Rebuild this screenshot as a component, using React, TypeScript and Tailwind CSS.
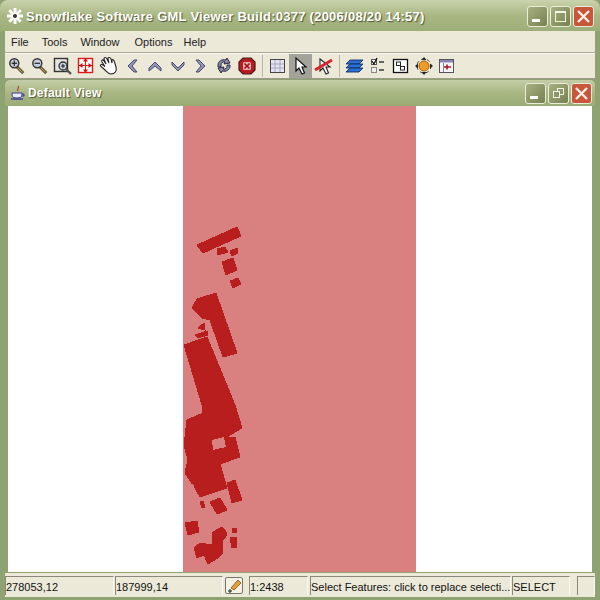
import React from "react";

const Mag = ({ sign }: { sign: "+" | "-" }) => (
  <svg width="18" height="18" viewBox="0 0 20 20">
    <line x1="10" y1="11" x2="17" y2="18" stroke="#6a5a3a" strokeWidth="3.400" />
    <line x1="11" y1="12" x2="16" y2="17" stroke="#c8b060" strokeWidth="1" />
    <circle cx="7" cy="7" r="5" fill="#c8ccdc" stroke="#333" strokeWidth="1.600" />
    <line x1="4" y1="7" x2="10" y2="7" stroke="#222" strokeWidth="1.300" />
    {sign === "+" && <line x1="7" y1="4" x2="7" y2="10" stroke="#222" strokeWidth="1.300" />}
  </svg>
);

const ZoomBox = () => (
  <svg width="20" height="20" viewBox="0 0 20 20">
    <rect x="1.500" y="2.500" width="13" height="13" fill="#e8e6de" stroke="#333" strokeWidth="1.400" />
    <circle cx="10" cy="10" r="4" fill="#c8ccdc" stroke="#333" strokeWidth="1.300" />
    <line x1="8" y1="10" x2="12" y2="10" stroke="#222" />
    <line x1="10" y1="8" x2="10" y2="12" stroke="#222" />
    <line x1="13" y1="13" x2="18" y2="18" stroke="#555" strokeWidth="2.400" />
  </svg>
);

const FullExtent = () => (
  <svg width="20" height="20" viewBox="0 0 20 20">
    <rect x="2.500" y="2.500" width="14" height="14" fill="#fff" stroke="#e01818" strokeWidth="1.400" />
    <line x1="9.500" y1="2.500" x2="9.500" y2="16.500" stroke="#e01818" />
    <line x1="2.500" y1="9.500" x2="16.500" y2="9.500" stroke="#e01818" />
    <path d="M9.500 2L7 5.500H12ZM9.500 17L7 13.500H12ZM3 9.500L6.500 7V12ZM16 9.500L12.500 7V12Z" fill="#d01010" />
  </svg>
);

const Hand = () => (
  <svg width="20" height="20" viewBox="0 0 20 20">
    <path d="M3 6C2 4 4 3 5 5L7 8L5 3C5 1 7 1 8 3L10 7L9 2.500C9 1 11 1 12 3L13 7L13 4C14 3 15 4 15.500 6L17 11C18 15 16 18 12 18C9 18 8 16 6 14L1.500 10C1 8.500 3 8 4 9L6 10.500Z" fill="#fff" stroke="#222" strokeWidth="1.100" />
  </svg>
);

const Chevron = ({ d }: { d: string }) => (
  <svg width="18" height="18" viewBox="0 0 18 18">
    <path d={d} fill="#9494bc" stroke="#4a4a6a" strokeWidth="1" />
  </svg>
);

const Refresh = () => (
  <svg width="20" height="20" viewBox="0 0 20 20">
    <path d="M4 9C4 5 8 3 12 4L13 2L16 7L10 8L11 6C8.500 5.500 7 7 7 9L7 11L4 11Z" fill="#8888a8" stroke="#2a2a40" strokeWidth="1" />
    <path d="M16 10C16 14 12 16 8 15L7 17L4 12L10 11L9 13C11.500 13.500 13 12 13 10L13 9L16 9Z" fill="#8888a8" stroke="#2a2a40" strokeWidth="1" />
  </svg>
);

const Stop = () => (
  <svg width="20" height="20" viewBox="0 0 20 20">
    <path d="M6 2H14L18 6V14L14 18H6L2 14V6Z" fill="#b81c22" stroke="#4a1a1a" strokeWidth="1.200" />
    <rect x="6" y="6" width="8" height="8" rx="1.500" fill="#e8b0b0" />
    <path d="M7.500 7.500L12.500 12.500M12.500 7.500L7.500 12.500" stroke="#a01010" strokeWidth="1.600" />
  </svg>
);

const Grid = () => (
  <svg width="18" height="18" viewBox="0 0 18 18">
    <rect x="1.500" y="2.500" width="14" height="13" fill="#e4e4f0" stroke="#444" />
    <path d="M6 3V15M11 3V15M2 7H15M2 11H15" stroke="#a8a8c0" fill="none" />
  </svg>
);

const Arrow = () => (
  <svg width="18" height="20" viewBox="0 0 18 20">
    <path d="M4 2V15L7 12L10 18L12.500 17L10 11H14Z" fill="#fff" stroke="#111" strokeWidth="1.200" />
  </svg>
);

const ArrowOff = () => (
  <svg width="20" height="20" viewBox="0 0 20 20">
    <path d="M6 3V15L9 12L12 18L14.500 17L12 11H16Z" fill="#fff" stroke="#222" strokeWidth="1.100" />
    <line x1="1" y1="14" x2="18" y2="4" stroke="#d8242c" strokeWidth="3" />
  </svg>
);

const Layers = () => (
  <svg width="20" height="20" viewBox="0 0 20 20">
    {[4, 8, 12].map((y) => (
      <path key={y} d={`M5 ${y}H18L14 ${y + 4}H1Z`} fill="#2a70d0" stroke="#102a68" strokeWidth="0.900" />
    ))}
  </svg>
);

const CheckList = () => (
  <svg width="18" height="18" viewBox="0 0 18 18">
    <rect x="2.500" y="2.500" width="5" height="5" fill="#fff" stroke="#555" />
    <path d="M3 4L5 7L8 1" stroke="#111" fill="none" strokeWidth="1.300" />
    <rect x="2.500" y="10.500" width="5" height="5" fill="#eee" stroke="#888" />
    <path d="M10 5H15M10 13H15" stroke="#666" strokeWidth="2" />
  </svg>
);

const Boxes = () => (
  <svg width="18" height="18" viewBox="0 0 18 18">
    <rect x="1.500" y="2.500" width="14" height="13" fill="#fff" stroke="#111" strokeWidth="1.300" />
    <rect x="4.500" y="5" width="4" height="3.500" fill="#fff" stroke="#222" />
    <rect x="8.500" y="9.500" width="4" height="3.500" fill="#fff" stroke="#222" />
  </svg>
);

const Orange = () => (
  <svg width="20" height="20" viewBox="0 0 20 20">
    <circle cx="10" cy="10" r="5" fill="#f09a28" stroke="#a86010" />
    <path d="M10 1L7.500 4H12.500ZM10 19L7.500 16H12.500ZM1 10L4 7.500V12.500ZM19 10L16 7.500V12.500Z" fill="#222" />
    <circle cx="10" cy="10" r="7" fill="none" stroke="#333" strokeDasharray="3 3" />
  </svg>
);

const WinPin = () => (
  <svg width="18" height="18" viewBox="0 0 18 18">
    <rect x="1.500" y="2.500" width="14" height="13" fill="#f6f4f4" stroke="#555" />
    <rect x="2" y="3" width="13" height="2.500" fill="#8c84b4" />
    <path d="M6 10H13M9 7.500V12.500" stroke="#b01828" strokeWidth="1.600" />
    <path d="M5.500 15V6" stroke="#888" />
  </svg>
);

const Tool = ({ children, active }: { children: React.ReactNode; active?: boolean }) => (
  <div className={`w-[23px] h-[24px] flex items-center justify-center shrink-0 ${active ? "bg-[#a3a39b]" : ""}`}>
    {children}
  </div>
);

const Sep = () => <div className="w-px h-[22px] mx-[3px] ml-[4px] bg-[#b8b6a6] shrink-0" />;

const WinBtn = ({ kind }: { kind: "min" | "max" | "restore" | "close" }) => {
  const base = "w-[21px] h-[21px] rounded-[3px] border border-[#e8ecd8] flex items-center justify-center shrink-0";
  const color = kind === "close" ? "bg-[#c8563a]" : "bg-gradient-to-br from-[#a7b184] to-[#76804f]";
  return (
    <div className={`${base} ${color}`}>
      <svg width="17" height="17" viewBox="0 0 17 17">
        {kind === "min" && <rect x="3" y="11" width="8" height="3" fill="#fff" />}
        {kind === "max" && (
          <g fill="none" stroke="#f2f4e6">
            <rect x="3.500" y="3.500" width="10" height="10" />
            <rect x="3" y="3" width="11" height="2" fill="#f2f4e6" stroke="none" />
          </g>
        )}
        {kind === "restore" && (
          <g fill="none" stroke="#f2f4e6">
            <rect x="7.500" y="3.500" width="6" height="6" />
            <rect x="3.500" y="6.500" width="6" height="6" fill="#8c9568" />
          </g>
        )}
        {kind === "close" && <path d="M3 3L14 14M14 3L3 14" stroke="#fbeee4" strokeWidth="2.400" />}
      </svg>
    </div>
  );
};

const Cell = ({ w, children }: { w: string; children?: React.ReactNode }) => (
  <div className={`${w} h-[19px] shrink-0 border-l border-t border-[#8a8878] border-b-[#fbfaf2] border-r border-r-[#fbfaf2] text-[11px] leading-[20px] text-[#111] whitespace-nowrap overflow-hidden`}>
    {children}
  </div>
);

const buildings = [
  "197,245 237,227 241,236 203,253",
  "217,249 225,247 228,252 218,255",
  "230,251 237,248 238,253 232,256",
  "222,262 233,258 237,270 226,275",
  "230,281 238,278 241,284 233,288",
  "192,308 197,299 216,293 237,353 223,357 210,320 202,318",
  "198,328 204,323 205,330",
  "195,335 207,331 208,335 198,338",
  "184,345 207,337 235,405 242,428 227,437 235,437 240,457 220,464 227,488 200,497 195,488 185,473 188,460 184,445 187,420 203,413 202,405",
  "227,483 235,480 242,500 232,503",
  "210,502 220,498 227,510 217,514",
  "200,502 203,501 205,507 202,508",
  "185,523 197,521 199,532 188,535",
  "194,548 200,543 212,545 213,532 220,528 222,527 227,533 225,538 222,540 223,553 218,558 208,564 204,555 197,558",
  "230,538 236,537 237,547 232,548",
  "232,528 236,528 237,532 233,533",
];

const gaps = [
  "212,440 224,437 226,447 213,450",
  "190,485 193,484 198,497 196,498",
];

export default function App() {
  return (
    <div
      className="w-[600px] h-[600px] overflow-hidden bg-[#8fa271] flex flex-col text-[#111]"
      style={{ fontFamily: '"Liberation Sans", Arial, sans-serif' }}
    >
      <div className="h-[31px] shrink-0 rounded-t-[8px] bg-gradient-to-b from-[#c9d3ae] via-[#a9b783] to-[#9eae79] flex items-center pl-[6px] pr-[6px]">
        <svg width="18" height="18" viewBox="0 0 18 18" className="shrink-0">
          <g stroke="#fff" strokeWidth="3">
            <line x1="9" y1="1" x2="9" y2="17" />
            <line x1="1" y1="9" x2="17" y2="9" />
            <line x1="3.300" y1="3.300" x2="14.700" y2="14.700" />
            <line x1="14.700" y1="3.300" x2="3.300" y2="14.700" />
          </g>
          <circle cx="9" cy="9" r="2" fill="#333" />
        </svg>
        <div className="ml-[2px] mt-[2px] flex-1 text-[13px] font-bold tracking-[0.25px] text-white whitespace-nowrap [text-shadow:1px_1px_1px_#4c5636]">
          Snowflake Software GML Viewer Build:0377 (2006/08/20 14:57)
        </div>
        <div className="flex gap-[2px] mt-[1px]">
          <WinBtn kind="min" />
          <WinBtn kind="max" />
          <WinBtn kind="close" />
        </div>
      </div>

      <div className="mx-[5px] flex flex-col flex-1 min-h-0">
        <div className="h-[21px] shrink-0 bg-[#ece9d8] flex items-center text-[11px] text-[#222] pl-[6px] gap-[13px] pt-[1px]">
          <span>File</span>
          <span>Tools</span>
          <span>Window</span>
          <span className="ml-[2px]">Options</span>
          <span className="-ml-[2px]">Help</span>
        </div>
        <div className="h-[2px] shrink-0 bg-[#a9a797] border-b border-[#fbfaf2]" />
        <div className="h-[25px] shrink-0 bg-[#ece9d8] flex items-center border-b border-[#9c9a8c]">
          <Tool><Mag sign="+" /></Tool>
          <Tool><Mag sign="-" /></Tool>
          <Tool><ZoomBox /></Tool>
          <Tool><FullExtent /></Tool>
          <Tool><Hand /></Tool>
          <Tool><Chevron d="M11 3L5 9L11 15L14 15L9 9L14 3Z" /></Tool>
          <Tool><Chevron d="M3 11L9 5L15 11L15 14L9 9L3 14Z" /></Tool>
          <Tool><Chevron d="M3 5L9 11L15 5L15 8L9 14L3 8Z" /></Tool>
          <Tool><Chevron d="M7 3L13 9L7 15L4 15L9 9L4 3Z" /></Tool>
          <Tool><Refresh /></Tool>
          <Tool><Stop /></Tool>
          <Sep />
          <Tool><Grid /></Tool>
          <Tool active><Arrow /></Tool>
          <Tool><ArrowOff /></Tool>
          <Sep />
          <Tool><Layers /></Tool>
          <Tool><CheckList /></Tool>
          <Tool><Boxes /></Tool>
          <Tool><Orange /></Tool>
          <Tool><WinPin /></Tool>
        </div>

        <div className="h-[26px] shrink-0 mt-px rounded-t-[5px] bg-gradient-to-b from-[#c3cda7] via-[#a9b783] to-[#9aab74] flex items-center pl-[5px] pr-[3px]">
          <svg width="16" height="16" viewBox="0 0 16 16" className="shrink-0">
            <path d="M8 1C10 3 6 4 8 6" stroke="#c04028" fill="none" strokeWidth="1.300" />
            <path d="M2 8H12V10C12 12 10 13 7 13C4 13 2 12 2 10Z" fill="#e8e8f8" stroke="#3a3a98" />
            <path d="M12 9H14V11H12" stroke="#3a3a98" fill="none" />
            <path d="M1 14H13" stroke="#3a3a98" strokeWidth="1.400" />
          </svg>
          <div className="ml-[2px] flex-1 text-[12px] font-bold tracking-[0.2px] text-white [text-shadow:1px_1px_1px_#4c5636]">
            Default View
          </div>
          <div className="flex gap-[2px]">
            <WinBtn kind="min" />
            <WinBtn kind="restore" />
            <WinBtn kind="close" />
          </div>
        </div>

        <div className="h-[466px] shrink-0 mx-[3px] flex bg-white">
          <div className="w-[175px] shrink-0" />
          <div className="w-[233px] shrink-0 bg-[#d98080]">
            <svg
              width="233"
              height="466"
              viewBox="183 106 233 466"
              className="block"
              shapeRendering="crispEdges"
            >
              {buildings.map((p) => (
                <polygon key={p} points={p} fill="#b91e1e" stroke="#b91e1e" strokeWidth="1" />
              ))}
              {gaps.map((p) => (
                <polygon key={p} points={p} fill="#d98080" />
              ))}
            </svg>
          </div>
        </div>

        <div className="flex items-center h-[24px] shrink-0 bg-[#ece9d8] mt-[1px]">
          <Cell w="w-[109px]">278053,12</Cell>
          <div className="w-[1px] shrink-0" />
          <Cell w="w-[108px]">187999,14</Cell>
          <div className="w-[2px] shrink-0" />
          <div className="w-[18px] h-[17px] shrink-0 rounded-[2px] border border-[#77766a] bg-[#f4f2e6] flex items-center justify-center">
            <svg width="15" height="15" viewBox="0 0 15 15">
              <path d="M4 10L11 2L14 5L7 12Z" fill="#e8a038" stroke="#7a5010" strokeWidth="0.800" />
              <path d="M1 13H5M3 11V15" stroke="#222" />
            </svg>
          </div>
          <div className="w-[6px] shrink-0" />
          <Cell w="w-[59px]">1:2438</Cell>
          <div className="w-[2px] shrink-0" />
          <Cell w="w-[201px]">Select Features: click to replace selecti...</Cell>
          <div className="w-[1px] shrink-0" />
          <Cell w="w-[58px]">SELECT</Cell>
          <div className="w-[7px] shrink-0" />
          <Cell w="w-[18px]" />
        </div>
      </div>
    </div>
  );
}
